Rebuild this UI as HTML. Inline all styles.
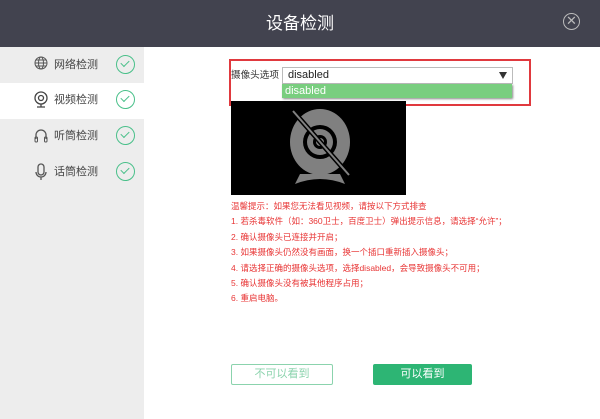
<!DOCTYPE html>
<html><head><meta charset="utf-8"><style>
*{margin:0;padding:0;box-sizing:border-box}
body{width:600px;height:419px;overflow:hidden;background:#fff;font-family:"Liberation Sans","Noto Sans CJK SC",sans-serif;position:relative}
.hd{position:absolute;left:0;top:0;width:600px;height:47px;background:#42434f;color:#fff;font-size:17px;text-align:center;line-height:47px}
.cl{position:absolute;left:563px;top:13px;width:17px;height:17px;border:1.3px solid #bbb;border-radius:50%;color:#bbb;font-size:13px;line-height:14px;text-align:center}
.sb{position:absolute;left:0;top:47px;width:144px;height:372px;background:#ededed}
.it{position:absolute;left:0;width:144px;height:36px;font-size:11px;color:#444}
.it .t{position:absolute;left:54px;top:10px;line-height:14px}
.it .ic{position:absolute;left:34px;top:8px}
.ck{position:absolute;left:116px;top:7px;width:19px;height:19px;border:1.5px solid #4ac08a;border-radius:50%}
.ck:after{content:"";position:absolute;left:4px;top:4px;width:7px;height:4px;border-left:1.5px solid #4ac08a;border-bottom:1.5px solid #4ac08a;transform:rotate(-45deg)}
.rb{position:absolute;left:229px;top:59px;width:302px;height:47px;border:2px solid #e0393e}
.lab{position:absolute;left:231px;top:69px;font-size:9.6px;color:#333;line-height:14px}
.sel{position:absolute;left:282px;top:67px;width:231px;height:17px;border:1px solid #bbb;background:#fff;font-size:11px;line-height:15px;padding-left:5px;color:#222}
.sel:after{content:"";position:absolute;right:5px;top:4px;border-left:4px solid transparent;border-right:4px solid transparent;border-top:7px solid #333}
.op{position:absolute;left:282px;top:84px;width:230px;height:14px;background:#79ce7f;color:#fff;font-size:11px;line-height:14px;padding-left:3px;box-shadow:1px 1px 2px #888}
.vid{position:absolute;left:231px;top:101px;width:175px;height:94px;background:#000}
.tx{position:absolute;left:231px;top:199px;font-size:8.5px;color:#e83535;line-height:15.4px}
.b1{position:absolute;left:231px;top:364px;width:102px;height:21px;border:1px solid #8bd3ad;color:#8bd3ad;font-size:11px;text-align:center;line-height:19px;border-radius:2px}
.b2{position:absolute;left:373px;top:364px;width:99px;height:21px;background:#2db574;color:#fff;font-size:11px;text-align:center;line-height:21px;border-radius:2px}
</style></head><body>
<div class="hd">设备检测</div>
<div class="cl">✕</div>
<div class="sb">
<div class="it" style="top:1px"><svg class="ic" width="14" height="16" viewBox="0 0 14 16"><circle cx="7" cy="7" r="6" fill="none" stroke="#555"/><ellipse cx="7" cy="7" rx="2.5" ry="6" fill="none" stroke="#555"/><path d="M1 7h12M2 4h10M2 10h10" stroke="#555"/></svg><span class="t">网络检测</span><div class="ck"></div></div>
<div class="it" style="top:36px;background:#fff"><svg class="ic" width="14" height="18" viewBox="0 0 14 18"><circle cx="7" cy="7" r="6" fill="none" stroke="#444" stroke-width="1.3"/><circle cx="7" cy="7" r="2.5" fill="none" stroke="#444" stroke-width="1.3"/><path d="M3 16h8M7 13v3" stroke="#444" stroke-width="1.3"/></svg><span class="t">视频检测</span><div class="ck"></div></div>
<div class="it" style="top:72px"><svg class="ic" width="14" height="18" viewBox="0 0 14 18"><path d="M2 12V8a5 5 0 0 1 10 0v4" fill="none" stroke="#555" stroke-width="1.3"/><rect x="1" y="10" width="2.5" height="5" rx="1" fill="none" stroke="#555"/><rect x="10.5" y="10" width="2.5" height="5" rx="1" fill="none" stroke="#555"/></svg><span class="t">听筒检测</span><div class="ck"></div></div>
<div class="it" style="top:108px"><svg class="ic" width="14" height="18" viewBox="0 0 14 18"><rect x="4" y="1" width="6" height="11" rx="3" fill="none" stroke="#555" stroke-width="1.3"/><path d="M2 9a5 5 0 0 0 10 0M7 14v3" fill="none" stroke="#555" stroke-width="1.3"/></svg><span class="t">话筒检测</span><div class="ck"></div></div>
</div>
<div class="rb"></div>
<div class="lab">摄像头选项</div>
<div class="sel">disabled</div>
<div class="op">disabled</div>
<div class="vid"><svg width="175" height="94" viewBox="0 0 175 94"><ellipse cx="89" cy="41" rx="30" ry="33" fill="#808080"/><circle cx="89" cy="41" r="17" fill="#000"/><circle cx="89" cy="41" r="13" fill="#808080"/><circle cx="89" cy="41" r="7" fill="#000"/><circle cx="89" cy="41" r="4" fill="#808080"/><path d="M64 83q25-10 50 0l-5-10h-40z" fill="#808080"/><line x1="62" y1="10" x2="118" y2="74" stroke="#000" stroke-width="5"/><line x1="62" y1="10" x2="118" y2="74" stroke="#808080" stroke-width="2"/></svg></div>
<div class="tx">温馨提示：如果您无法看见视频，请按以下方式排查<br>1. 若杀毒软件（如：360卫士，百度卫士）弹出提示信息，请选择“允许”；<br>2. 确认摄像头已连接并开启；<br>3. 如果摄像头仍然没有画面，换一个插口重新插入摄像头；<br>4. 请选择正确的摄像头选项，选择disabled，会导致摄像头不可用；<br>5. 确认摄像头没有被其他程序占用；<br>6. 重启电脑。</div>
<div class="b1">不可以看到</div>
<div class="b2">可以看到</div>
</body></html>
